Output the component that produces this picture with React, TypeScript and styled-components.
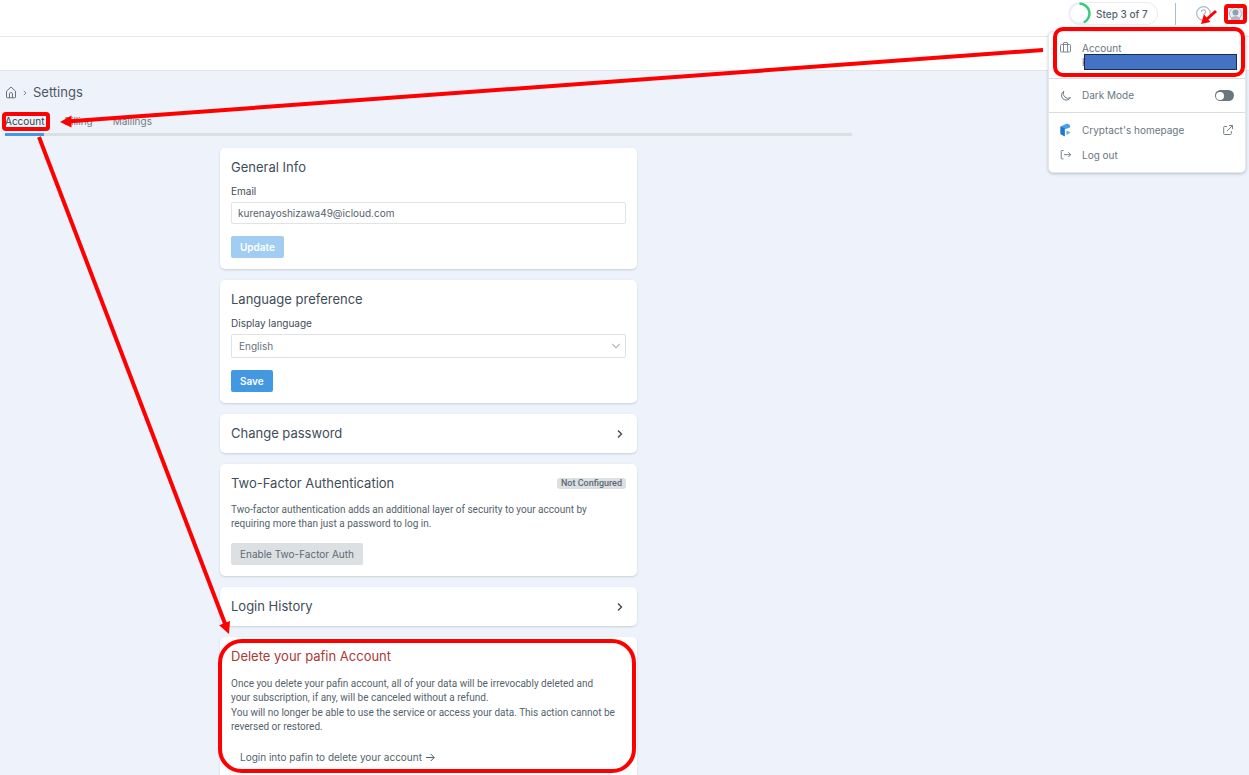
import React from "react";
import styled, { createGlobalStyle } from "styled-components";

const GlobalStyle = createGlobalStyle`
  *, *::before, *::after { box-sizing: border-box; }
  html { scrollbar-width: none; background: #eef2fa; }
  body { margin: 0; }
  body, button, input, select {
    font-family: Inter, "Open Sans", sans-serif;
    font-size: 10px;
    line-height: 14px;
    color: #55636d;
  }
  h1, h2, p { margin: 0; font-weight: 400; }
  a { color: inherit; text-decoration: none; }
`;

const Page = styled.div`
  position: relative;
  min-height: 100vh;
  overflow: hidden;
  background: #eef2fa;
`;

const TopBar = styled.header`
  display: flex;
  align-items: center;
  justify-content: flex-end;
  height: 37px;
  padding: 2px 4px 11px 0;
  background: #fff;
  border-bottom: 1px solid #e3e8ed;
`;

const SubBar = styled.div`
  height: 34px;
  background: #fff;
  border-bottom: 1px solid #e1e5ea;
`;

const StepPill = styled.button`
  display: flex;
  align-items: center;
  gap: 5px;
  width: 90px;
  height: 23px;
  padding: 0;
  border: 1px solid #e9eef5;
  border-left: 0;
  border-radius: 12px;
  background: #fff;
  font-weight: 500;
  white-space: nowrap;
`;

const BarDivider = styled.span`
  width: 1px;
  height: 22px;
  margin: 0 20px 0 17px;
  background: #a9bccd;
`;

const IconButton = styled.button`
  position: relative;
  display: flex;
  align-items: center;
  justify-content: center;
  height: 16px;
  padding: 0;
  border: 0;
  background: none;
`;

const AvatarButton = styled(IconButton)`
  width: 19px;
  margin-left: 15px;
  background: #e8eef6;
`;

const Highlight = styled.span<{ $inset: string; $radius: number }>`
  position: absolute;
  inset: ${(p) => p.$inset};
  border: 4px solid #fe0000;
  border-radius: ${(p) => p.$radius}px;
  pointer-events: none;
`;

const Menu = styled.nav`
  position: absolute;
  top: 31px;
  right: 3px;
  width: 198px;
  background: #fff;
  border: 1px solid #e4e8ec;
  border-radius: 5px;
  box-shadow: 0 1px 3px rgba(60, 75, 95, 0.3);
`;

const MenuSection = styled.div`
  position: relative;
  display: flex;
  flex-direction: column;
  gap: 11px;
  padding: 9px 11px;
  color: #6a7680;

  & + & {
    padding: 10px 11px;
    border-top: 1px solid #d9dde0;
  }
`;

const menuRow = `
  display: grid;
  grid-template-columns: 12px 1fr auto;
  column-gap: 10px;
  align-items: center;
`;
const MenuLink = styled.a`${menuRow}`;
const MenuLabel = styled.label`${menuRow} line-height: 13px;`;

const HiddenEmail = styled.span`
  position: relative;
  grid-column: 2 / 4;
`;

const Redaction = styled.span`
  position: absolute;
  inset: -1px -3px -1px 2px;
  background: #4472c4;
  border: 1px solid #172c51;
`;

const Switch = styled.input`
  appearance: none;
  display: flex;
  align-items: center;
  width: 19px;
  height: 11px;
  margin: 0;
  padding: 0 1px;
  border-radius: 6px;
  background: #6b767e;

  &::before {
    content: "";
    width: 8px;
    height: 8px;
    border-radius: 50%;
    background: #fff;
  }
  &:checked { justify-content: flex-end; background: #4299e1; }
`;

const Main = styled.main`
  max-width: 852px;
  padding: 12px 0 0 5px;
`;

const Breadcrumb = styled.div`
  display: flex;
  align-items: center;
  gap: 6px;
  height: 19px;
`;

const PageTitle = styled.h1`
  font-size: 13px;
  line-height: 19px;
  color: #4b5863;
`;

const Tabs = styled.nav`
  display: flex;
  gap: 20px;
  margin-top: 12px;
  border-bottom: 3px solid #dadfe2;
`;

const Tab = styled.a<{ $active?: boolean }>`
  position: relative;
  height: 22px;
  margin-bottom: -3px;
  border-bottom: 3px solid ${(p) => (p.$active ? "#4299e1" : "transparent")};
  color: ${(p) => (p.$active ? "#35424e" : "#707c85")};
`;

const Cards = styled.div`
  display: flex;
  flex-direction: column;
  gap: 11px;
  max-width: 417px;
  margin: 12px auto 0;
`;

const Card = styled.section`
  position: relative;
  padding: 11px;
  background: #fff;
  border-radius: 5px;
  box-shadow: 0 1px 2px rgba(70, 85, 105, 0.22);
`;

const CardTitle = styled.h2<{ $danger?: boolean }>`
  font-size: 13px;
  line-height: 17px;
  color: ${(p) => (p.$danger ? "#a93a34" : "#3f4d58")};
`;

const CardHead = styled.div`
  display: flex;
  align-items: center;
  justify-content: space-between;
`;

const ExpandButton = styled.button`
  display: flex;
  align-items: center;
  justify-content: space-between;
  width: 100%;
  padding: 0;
  border: 0;
  background: none;
  text-align: left;
`;

const FieldLabel = styled.label`
  display: block;
  margin: 8px 0 4px;
  color: #3f4c57;
`;

const TextInput = styled.input`
  display: block;
  width: 100%;
  height: 22px;
  padding: 0 6px;
  border: 1px solid #e1e4e7;
  border-radius: 2px;
  background: #fff;
`;

const SelectWrap = styled.div`
  display: grid;
  align-items: center;

  & > * { grid-area: 1 / 1; }
  & > svg { justify-self: end; margin-right: 5px; pointer-events: none; }
`;

const Select = styled.select`
  appearance: none;
  width: 100%;
  height: 24px;
  padding: 0 7px;
  border: 1px solid #dce2e6;
  border-radius: 2px;
  background: #fff;
  color: #65727c;
`;

const Button = styled.button<{ $tone?: "primary" | "gray" }>`
  display: block;
  height: 22px;
  margin-top: 12px;
  padding: 0 9px;
  border: 0;
  border-radius: 2px;
  font-weight: ${(p) => (p.$tone === "gray" ? 400 : 600)};
  background: ${(p) => (p.$tone === "gray" ? "#dce0e3" : "#4299e1")};
  color: ${(p) => (p.$tone === "gray" ? "#5e6a73" : "#fff")};

  &:disabled { background: #a0cdf1; }
`;

const Badge = styled.span`
  padding: 0 4px;
  border-radius: 3px;
  background: #dce0e3;
  color: #5c6973;
  font-family: Roboto, Inter, sans-serif;
  font-size: 9px;
  line-height: 11px;
  font-weight: 500;
`;

const Paragraph = styled.p<{ $gap: number }>`
  margin-top: ${(p) => p.$gap}px;
  font-family: Roboto, Inter, sans-serif;
`;

const TextLink = styled.a`
  display: flex;
  align-items: center;
  gap: 4px;
  height: 22px;
  margin: 12px 9px 0;
`;

const Arrows = styled.svg`
  position: absolute;
  top: 0;
  left: 0;
  pointer-events: none;
`;

const Chevron = () => (
  <svg width="12" height="12" viewBox="0 0 12 12" fill="none" stroke="#3c4a55" strokeWidth="1.4">
    <path d="M4 2.5 7.5 6 4 9.5" />
  </svg>
);

function UserMenu() {
  return (
    <Menu aria-label="User menu">
      <MenuSection>
        <MenuLink href="#account">
          <svg width="12" height="12" viewBox="0 0 12 12" fill="none" stroke="#7b8791">
            <rect x="0.5" y="2.5" width="10" height="7.5" rx="1" />
            <path d="M3.500 2.500v7.500M7.500 2.500v7.500M3.500 2.500v-1.500q0-.5.5-.5h3q.5 0 .5.5v1.500" />
          </svg>
          <span>Account</span>
          <HiddenEmail>
            k<Redaction />
          </HiddenEmail>
        </MenuLink>
        <Highlight $inset="-5px 0 1px 4px" $radius={10} />
      </MenuSection>
      <MenuSection>
        <MenuLabel htmlFor="dark-mode">
          <svg width="12" height="12" viewBox="0 0 12 12" fill="none" stroke="#6f7b85" strokeLinejoin="round">
            <path d="M3.800 1.200A4.800 4.800 0 1 0 10.500 7.600 4.800 4.800 0 0 1 3.800 1.200Z" />
          </svg>
          <span>Dark Mode</span>
          <Switch id="dark-mode" type="checkbox" />
        </MenuLabel>
      </MenuSection>
      <MenuSection>
        <MenuLink href="#home">
          <svg width="12" height="14" viewBox="0 0 12 14">
            <path d="M.5 3.500 7 .5l3 1.500v2.500L5 6.300V13.500L.5 11Z" fill="#4a9fe8" />
            <path d="M.5 3.500 4.500 5.300V13.300L.5 11Z" fill="#1f76cc" />
            <path d="m6.500 7.500 4 2-4 2.500Z" fill="#5aaef2" />
          </svg>
          <span>Cryptact's homepage</span>
          <svg width="12" height="12" viewBox="0 0 12 12" fill="none" stroke="#75818b">
            <path d="M5 2.500H2.500q-.8 0-.8.8v6.400q0 .8.8.8h6q.8 0 .8-.8V7M7 1.500h3.500V5M10.500 1.500 5 7" />
          </svg>
        </MenuLink>
        <MenuLink href="#logout">
          <svg width="12" height="12" viewBox="0 0 12 12" fill="none" stroke="#75818b">
            <path d="M3.500 1.500H2q-.8 0-.8.8v6.800q0 .8.8.8h1.500M4 5.700H10.500M8.300 3.300 10.700 5.700 8.300 8.100" />
          </svg>
          <span>Log out</span>
        </MenuLink>
      </MenuSection>
    </Menu>
  );
}

export default function App() {
  return (
    <>
      <GlobalStyle />
      <Page>
        <TopBar>
          <StepPill>
            <svg width="23" height="23" viewBox="0 0 23 23" fill="none">
              <circle cx="11.5" cy="11.5" r="10" stroke="#e9eff6" strokeWidth="2" />
              <path d="M11.5 1.5A10 10 0 0 1 15.8 20.5" stroke="#36cb78" strokeWidth="2.400" />
            </svg>
            Step 3 of 7
          </StepPill>
          <BarDivider />
          <IconButton aria-label="Help">
            <svg width="15" height="15" viewBox="0 0 15 15" fill="none" stroke="#a9b8c8">
              <circle cx="7.5" cy="7.5" r="6.8" strokeWidth="1.2" />
              <path d="M5.400 6a2.100 2.100 0 1 1 3.100 1.800q-1 .5-1 1.400M7.500 10.300v1.200" strokeWidth="1.2" />
            </svg>
          </IconButton>
          <AvatarButton aria-label="Account menu">
            <svg width="15" height="13" viewBox="0 0 15 13" fill="none">
              <circle cx="7.5" cy="6.5" r="6" stroke="#a9b8c8" />
              <circle cx="7.5" cy="5.5" r="3" fill="#8da0b5" />
              <path d="M3 11q4.500-4 9 0v2H3Z" fill="#a9b8c8" />
            </svg>
            <Highlight $inset="-2px" $radius={4} />
          </AvatarButton>
        </TopBar>
        <SubBar />

        <Main>
          <Breadcrumb>
            <svg width="12" height="13" viewBox="0 0 12 13" fill="none" stroke="#65727c">
              <path d="M1.500 5.200 6 1l4.500 4.200V11q0 .8-.8.8H2.300q-.8 0-.8-.8ZM4.500 11.800V7.500q0-.8.8-.8h1.400q.8 0 .8.8v4.300" />
            </svg>
            <svg width="4" height="6" viewBox="0 0 4 6" fill="none" stroke="#7d8993">
              <path d="M.8.800 3 3 .8 5.200" />
            </svg>
            <PageTitle>Settings</PageTitle>
          </Breadcrumb>
          <Tabs aria-label="Settings sections">
            <Tab href="#account" $active>
              Account
              <Highlight $inset="-2px -6px 2px -3px" $radius={4} />
            </Tab>
            <Tab href="#billing">Billing</Tab>
            <Tab href="#mailings">Mailings</Tab>
          </Tabs>

          <Cards>
            <Card>
              <CardTitle>General Info</CardTitle>
              <FieldLabel htmlFor="email">Email</FieldLabel>
              <TextInput id="email" type="email" defaultValue="kurenayoshizawa49@icloud.com" />
              <Button disabled>Update</Button>
            </Card>

            <Card>
              <CardTitle>Language preference</CardTitle>
              <FieldLabel htmlFor="language">Display language</FieldLabel>
              <SelectWrap>
                <Select id="language" defaultValue="English">
                  <option>English</option>
                </Select>
                <svg width="10" height="8" viewBox="0 0 10 8" fill="none" stroke="#b9bfc4" strokeWidth="1.300">
                  <path d="M1.200 2 5 5.800 8.800 2" />
                </svg>
              </SelectWrap>
              <Button>Save</Button>
            </Card>

            <Card>
              <ExpandButton>
                <CardTitle as="span">Change password</CardTitle>
                <Chevron />
              </ExpandButton>
            </Card>

            <Card>
              <CardHead>
                <CardTitle>Two-Factor Authentication</CardTitle>
                <Badge>Not Configured</Badge>
              </CardHead>
              <Paragraph $gap={11}>
                Two-factor authentication adds an additional layer of security to your account by
                <br />
                requiring more than just a password to log in.
              </Paragraph>
              <Button $tone="gray">Enable Two-Factor Auth</Button>
            </Card>

            <Card>
              <ExpandButton>
                <CardTitle as="span">Login History</CardTitle>
                <Chevron />
              </ExpandButton>
            </Card>

            <Card>
              <CardTitle $danger>Delete your pafin Account</CardTitle>
              <Paragraph $gap={12}>
                Once you delete your pafin account, all of your data will be irrevocably deleted and
                <br />
                your subscription, if any, will be canceled without a refund.
              </Paragraph>
              <Paragraph $gap={1}>
                You will no longer be able to use the service or access your data. This action cannot be
                <br />
                reversed or restored.
              </Paragraph>
              <TextLink href="#delete">
                Login into pafin to delete your account
                <svg width="9" height="9" viewBox="0 0 9 9" fill="none" stroke="#4f5d67">
                  <path d="M0 4.500h8M4.800 1 8.200 4.500 4.800 8" />
                </svg>
              </TextLink>
              <Highlight $inset="2px 1px 6px -2px" $radius={24} />
            </Card>
          </Cards>
        </Main>

        <UserMenu />
        <Arrows width="1249" height="640" viewBox="0 0 1249 640" fill="#fe0000" stroke="#fe0000">
          <path d="M1043 50 70 121.300" strokeWidth="4" />
          <path d="M60 122 71.500 115.500V127.500Z" stroke="none" />
          <path d="M39 137 225.500 625" strokeWidth="4" />
          <path d="m229 634-9.800-8.800 10.800-4.200Z" stroke="none" />
          <path d="M1216 11 1207 19" strokeWidth="3" />
          <path d="m1201 24 3-9.500 6.500 7.500Z" stroke="none" />
        </Arrows>
      </Page>
    </>
  );
}
